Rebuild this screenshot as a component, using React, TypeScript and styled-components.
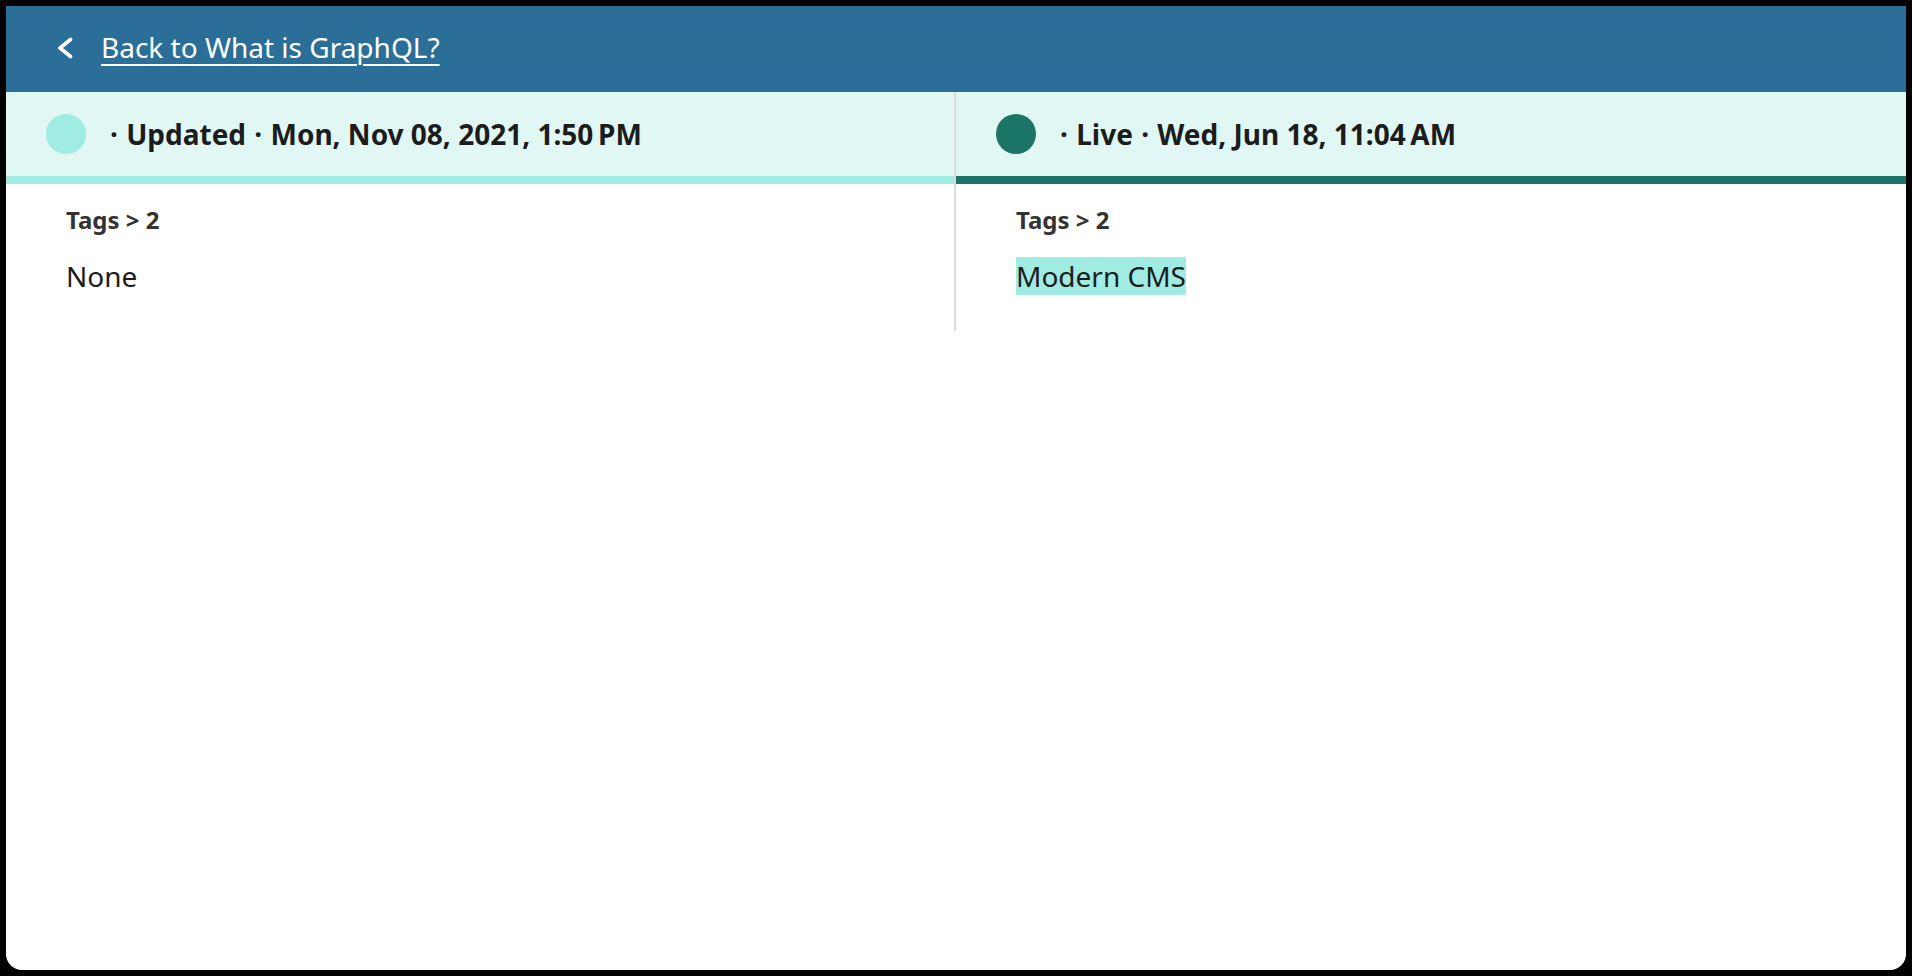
import styled, { createGlobalStyle } from "styled-components";

const GlobalStyle = createGlobalStyle`
  html, body {
    margin: 0;
    padding: 0;
    background: #000;
    overflow: hidden;
  }
  html {
    height: 976px;
  }
  body {
    padding: 6px;
    height: 976px;
    box-sizing: border-box;
    font-family: "Noto Sans", "Open Sans", sans-serif;
  }
  * {
    box-sizing: border-box;
  }
`;

interface Version {
  state: string;
  date: string;
  accent: string;
  label: string;
  tags: string[];
}

const versions: Version[] = [
  {
    state: "Updated",
    date: "Mon, Nov 08, 2021, 1:50\u202FPM",
    accent: "#a0ebe2",
    label: "Tags > 2",
    tags: [],
  },
  {
    state: "Live",
    date: "Wed, Jun 18, 11:04\u202FAM",
    accent: "#1b7567",
    label: "Tags > 2",
    tags: ["Modern CMS"],
  },
];

const ChevronLeft = () => (
  <svg width="16" height="22" viewBox="0 0 16 22" fill="none">
    <polyline
      points="13.5,2.5 3,11 13.5,19.5"
      stroke="#fff"
      strokeWidth="3.6"
      strokeLinecap="round"
      strokeLinejoin="round"
    />
  </svg>
);

const App = () => {
  return (
    <>
      <GlobalStyle />
      <Window>
        <Header>
          <BackIcon>
            <ChevronLeft />
          </BackIcon>
          <BackLink href="#">Back to What is GraphQL?</BackLink>
        </Header>
        <Columns>
          {versions.map((v, i) => (
            <Column key={v.state} $divider={i === 0}>
              <StatusBar $accent={v.accent}>
                <Dot $color={v.accent} />
                <StatusText>
                  <Sep $first>·</Sep> {v.state} <Sep>·</Sep> {v.date}
                </StatusText>
              </StatusBar>
              <Body>
                <FieldLabel>{v.label}</FieldLabel>
                <FieldValue>
                  {v.tags.length === 0
                    ? "None"
                    : v.tags.map((t) => <Added key={t}>{t}</Added>)}
                </FieldValue>
              </Body>
            </Column>
          ))}
        </Columns>
      </Window>
    </>
  );
};

export default App;

const Window = styled.div`
  background: #fff;
  height: 964px;
  border-radius: 0 0 16px 16px;
  overflow: hidden;
  display: flex;
  flex-direction: column;
`;

const Header = styled.div`
  height: 86px;
  background: #2b6f98;
  display: flex;
  align-items: center;
  padding: 0 0 4px 51px;
  gap: 28px;
`;

const BackIcon = styled.span`
  display: flex;
  align-items: center;
  margin-top: 2px;
`;

const BackLink = styled.a`
  color: #fff;
  font-size: 28px;
  line-height: 38px;
  text-decoration: underline;
  text-decoration-thickness: 2px;
  text-underline-offset: 6px;
`;

const Columns = styled.div`
  display: grid;
  grid-template-columns: 1fr 1fr;
  align-items: stretch;
`;

const Column = styled.div<{ $divider: boolean }>`
  display: flex;
  flex-direction: column;
  border-right: ${(p) => (p.$divider ? "2px solid #dcdcdc" : "none")};
`;

const StatusBar = styled.div<{ $accent: string }>`
  height: 92px;
  background: #e0f7f4;
  border-bottom: 8px solid ${(p) => p.$accent};
  display: flex;
  align-items: center;
  padding-left: 40px;
  gap: 24px;
`;

const Dot = styled.span<{ $color: string }>`
  width: 40px;
  height: 40px;
  border-radius: 50%;
  background: ${(p) => p.$color};
  flex-shrink: 0;
`;

const StatusText = styled.span`
  font-size: 28px;
  font-weight: 700;
  color: #1c1c1c;
  line-height: 38px;
`;

const Sep = styled.span<{ $first?: boolean }>`
  margin: ${(p) => (p.$first ? "0 1px 0 0" : "0 1px")};
`;

const Body = styled.div`
  padding: 19px 60px 36px;
  display: flex;
  flex-direction: column;
  gap: 21px;
`;

const FieldLabel = styled.div`
  font-size: 24px;
  font-weight: 700;
  color: #333;
  line-height: normal;
`;

const FieldValue = styled.div`
  font-size: 28px;
  color: #1c1c1c;
  line-height: 38px;
`;

const Added = styled.span`
  background: #a0ebe2;
`;
